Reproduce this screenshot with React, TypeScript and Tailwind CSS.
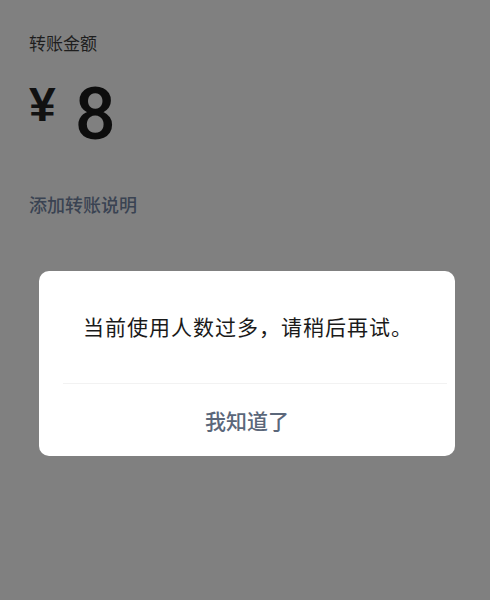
import React from "react";

const font = { fontFamily: '"Noto Sans CJK SC", "Liberation Sans", sans-serif' };

export default function App() {
  return (
    <div className="relative h-[600px] w-[490px] overflow-hidden bg-[#808080]" style={font}>
      {/* Page under the mask */}
      <div className="flex flex-col px-[29px] pt-[30px]">
        <p className="text-[17px] leading-[26px] text-[#1e1e1e]">转账金额</p>
        <div className="mt-[18px] flex items-start">
          <span
            className="mt-[1px] text-[48px] font-bold leading-[60px] text-[#111]"
            style={{ fontFamily: '"Liberation Sans", sans-serif' }}
          >
            ¥
          </span>
          <span
            className="ml-[19px] mt-[5px] text-[72px] font-medium leading-[72px] text-[#0d0d0d]"
            style={{ fontFamily: 'Roboto, "Liberation Sans", sans-serif' }}
          >
            8
          </span>
        </div>
        <p className="mt-[40px] text-[18px] font-medium leading-[26px] text-[#3a4352]">添加转账说明</p>
      </div>

      {/* Dialog */}
      <div className="absolute left-[39px] top-[271px] w-[416px] rounded-[10px] bg-white">
        <div className="flex h-[112px] items-center justify-center pb-[2px] pl-[2px]">
          <p className="text-[21px] leading-[28px] tracking-[1px] text-[#1a1a1a]">当前使用人数过多，请稍后再试。</p>
        </div>
        <div className="ml-[24px] mr-[8px] h-px bg-[#f2f2f2]" />
        <div className="flex h-[72px] items-center justify-center">
          <span className="text-[21px] font-medium leading-[28px] text-[#5b677a]">我知道了</span>
        </div>
      </div>
    </div>
  );
}
